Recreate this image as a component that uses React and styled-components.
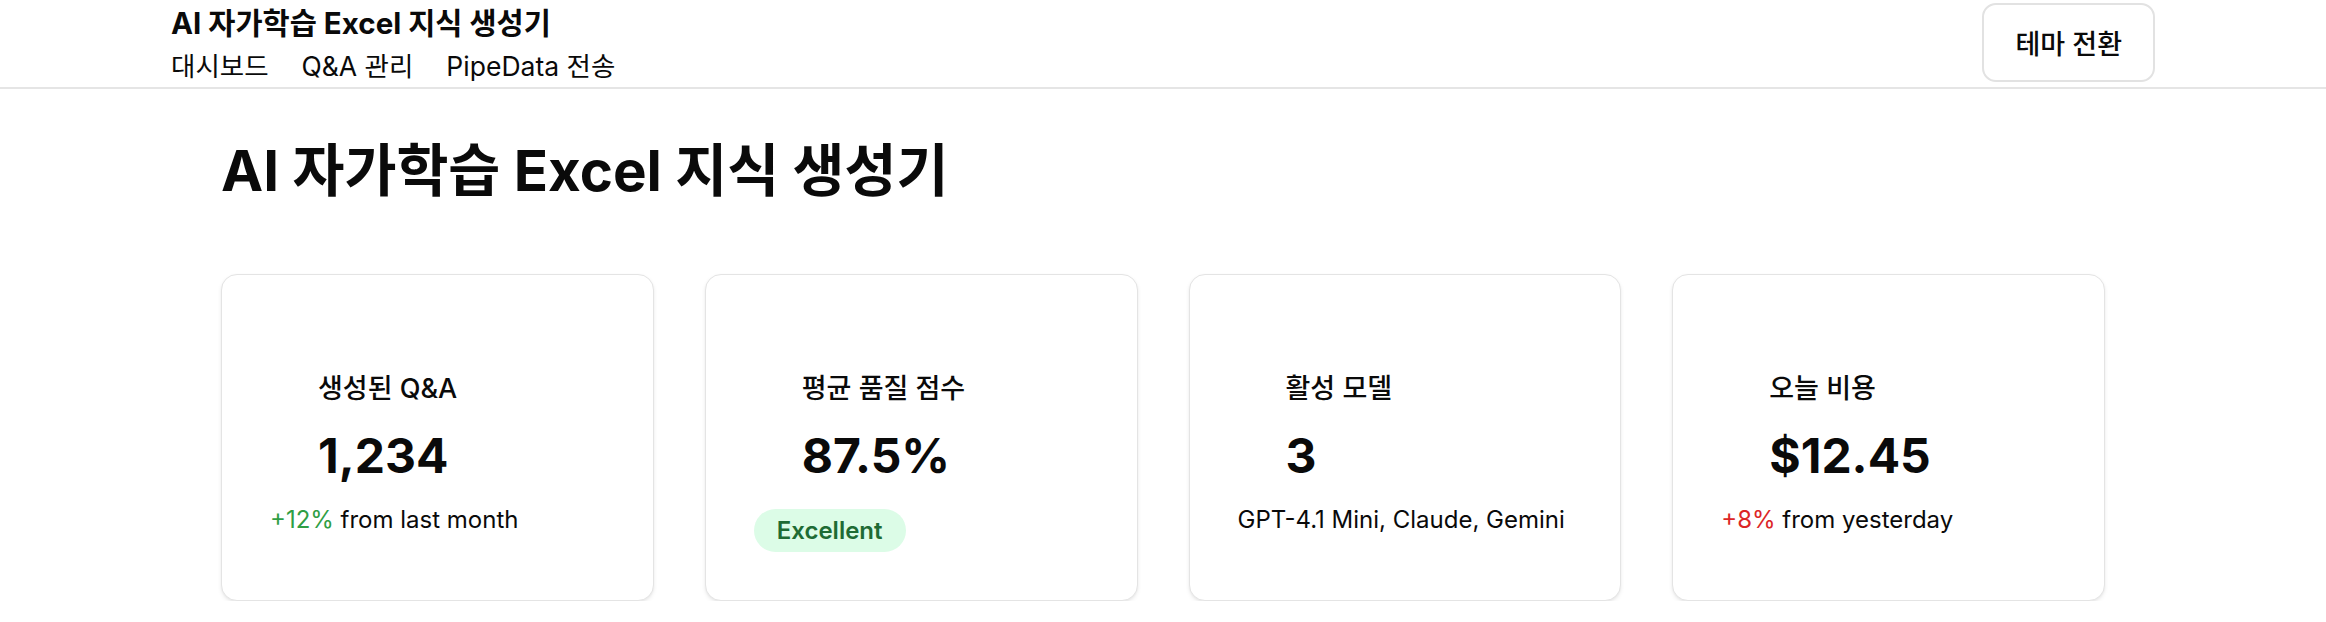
import React from 'react';
import styled, { createGlobalStyle } from 'styled-components';

const GlobalStyle = createGlobalStyle`
  html, body {
    margin: 0;
    padding: 0;
    background: #ffffff;
    color: #0a0a0a;
    font-family: "Inter", "Noto Sans CJK KR", sans-serif;
  }
  * {
    box-sizing: border-box;
  }
`;

const Header = styled.header`
  border-bottom: 2px solid #e5e5e5;
  padding: 4px 0 2px;
`;

const HeaderInner = styled.div`
  width: 1984px;
  margin: 0 auto;
  display: flex;
  align-items: center;
  justify-content: space-between;
`;

const Brand = styled.div`
  display: flex;
  flex-direction: column;
  gap: 4px;
`;

const BrandTitle = styled.div`
  font-size: 29.5px;
  line-height: 39px;
  font-weight: 700;
`;

const Nav = styled.nav`
  display: flex;
  gap: 33px;
`;

const NavLink = styled.a`
  font-size: 26.5px;
  line-height: 38px;
  color: #0a0a0a;
  text-decoration: none;
  cursor: pointer;
`;

const ThemeButton = styled.button`
  height: 79px;
  margin-top: -4px;
  padding: 0 31px;
  font-family: inherit;
  font-size: 27px;
  font-weight: 500;
  color: #0a0a0a;
  background: #ffffff;
  border: 2px solid #e2e2e2;
  border-radius: 14px;
  cursor: pointer;
`;

const Main = styled.main`
  width: 1884px;
  margin: 0 auto;
  padding-top: 48px;
`;

const PageTitle = styled.h1`
  margin: 0 0 70px;
  font-size: 56.5px;
  line-height: 67px;
  font-weight: 700;
`;

const Grid = styled.div`
  display: grid;
  grid-template-columns: repeat(4, 1fr);
  gap: 51px;
`;

const Card = styled.div`
  min-height: 327px;
  padding: 48px;
  border: 1.5px solid #e4e4e4;
  border-radius: 16px;
  background: #ffffff;
  box-shadow: 0 2px 4px rgba(0, 0, 0, 0.07), 0 1px 2px rgba(0, 0, 0, 0.04);
  display: flex;
  flex-direction: column;
  align-items: flex-start;
`;

const CardHead = styled.div`
  padding: 48px 48px 0;
`;

const Label = styled.div`
  font-size: 27px;
  line-height: 36px;
  font-weight: 500;
`;

const Value = styled.div`
  margin-top: 22px;
  font-size: 48px;
  line-height: 54px;
  font-weight: 700;
`;

const Sub = styled.div`
  margin-top: 20px;
  font-size: 24px;
  line-height: 34px;
  color: #0a0a0a;
`;

const Delta = styled.span`
  color: ${({ $tone }) => ($tone === 'up' ? '#2f9e44' : '#dc2626')};
`;

const Badge = styled.span`
  margin-top: 26px;
  padding: 4px 23px;
  font-size: 24px;
  line-height: 35px;
  font-weight: 600;
  color: #1e6b34;
  background: #dcfce7;
  border-radius: 999px;
`;

const stats = [
  { label: '생성된 Q&A', value: '1,234', delta: '+12%', tone: 'up', note: 'from last month' },
  { label: '평균 품질 점수', value: '87.5%', badge: 'Excellent' },
  { label: '활성 모델', value: '3', note: 'GPT-4.1 Mini, Claude, Gemini' },
  { label: '오늘 비용', value: '$12.45', delta: '+8%', tone: 'down', note: 'from yesterday' },
];

export default function App() {
  return (
    <>
      <GlobalStyle />
      <Header>
        <HeaderInner>
          <Brand>
            <BrandTitle>AI 자가학습 Excel 지식 생성기</BrandTitle>
            <Nav>
              <NavLink>대시보드</NavLink>
              <NavLink>Q&amp;A 관리</NavLink>
              <NavLink>PipeData 전송</NavLink>
            </Nav>
          </Brand>
          <ThemeButton>테마 전환</ThemeButton>
        </HeaderInner>
      </Header>
      <Main>
        <PageTitle>AI 자가학습 Excel 지식 생성기</PageTitle>
        <Grid>
          {stats.map((s) => (
            <Card key={s.label}>
              <CardHead>
                <Label>{s.label}</Label>
                <Value>{s.value}</Value>
              </CardHead>
              {s.badge ? (
                <Badge>{s.badge}</Badge>
              ) : (
                <Sub>
                  {s.delta && <Delta $tone={s.tone}>{s.delta}</Delta>}
                  {s.delta ? ' ' : ''}
                  {s.note}
                </Sub>
              )}
            </Card>
          ))}
        </Grid>
      </Main>
    </>
  );
}
